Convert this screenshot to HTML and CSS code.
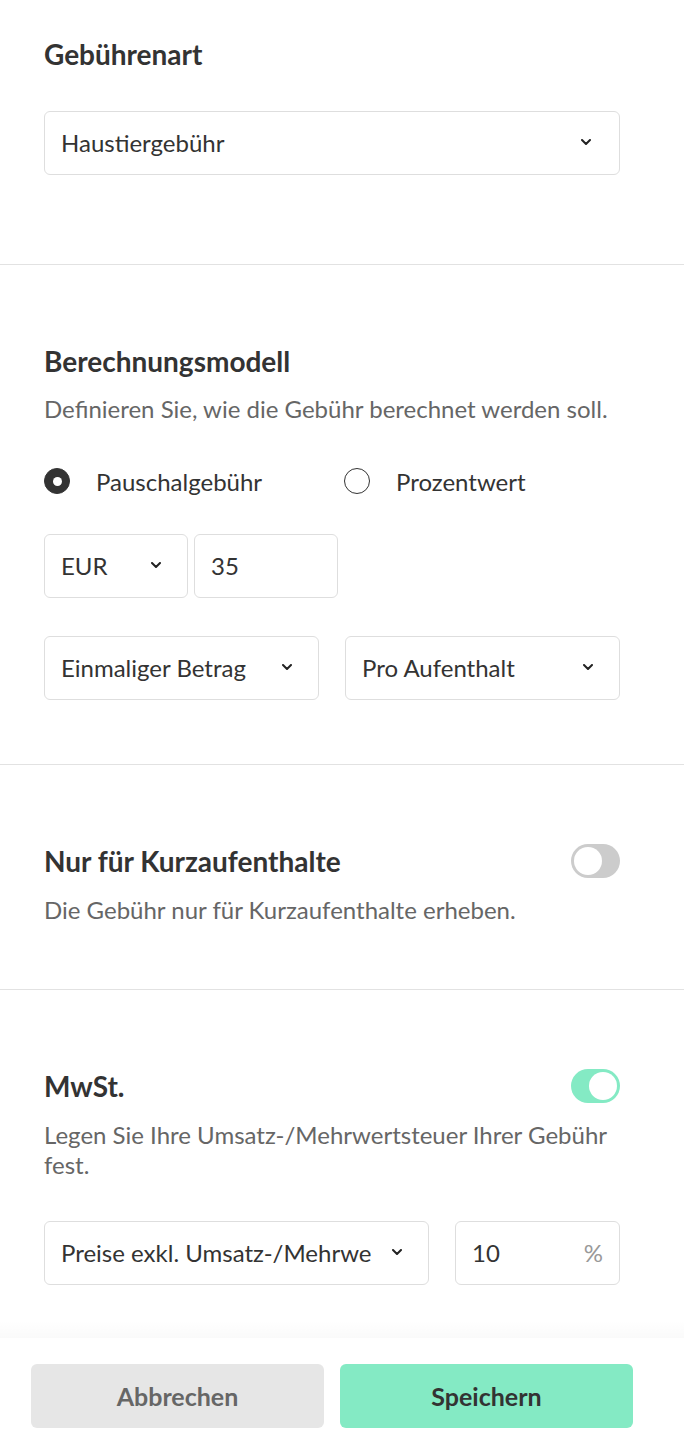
FILE: index.html
```html
<!DOCTYPE html>
<html lang="de">
<head>
<meta charset="utf-8">
<title>Gebühr</title>
<link rel="stylesheet" href="styles.css">
</head>
<body>
<div class="page">
  <section class="sec sec-1">
    <h2 class="title">Gebührenart</h2>
    <div class="field select">
      <span class="val">Haustiergebühr</span>
      <svg class="chev" viewBox="0 0 10 6" width="10" height="6"><path d="M1 1l4 4 4-4" fill="none" stroke="#222" stroke-width="2" stroke-linecap="round" stroke-linejoin="round"/></svg>
    </div>
  </section>

  <section class="sec sec-2">
    <h2 class="title">Berechnungsmodell</h2>
    <p class="desc">Definieren Sie, wie die Gebühr berechnet werden soll.</p>
    <div class="radios">
      <label class="radio"><span class="dot on"></span><span class="rlabel">Pauschalgebühr</span></label>
      <label class="radio"><span class="dot"></span><span class="rlabel">Prozentwert</span></label>
    </div>
    <div class="row row-amount">
      <div class="field select">
        <span class="val">EUR</span>
        <svg class="chev" viewBox="0 0 10 6" width="10" height="6"><path d="M1 1l4 4 4-4" fill="none" stroke="#222" stroke-width="2" stroke-linecap="round" stroke-linejoin="round"/></svg>
      </div>
      <div class="field input"><span class="val">35</span></div>
    </div>
    <div class="row row-freq">
      <div class="field select">
        <span class="val">Einmaliger Betrag</span>
        <svg class="chev" viewBox="0 0 10 6" width="10" height="6"><path d="M1 1l4 4 4-4" fill="none" stroke="#222" stroke-width="2" stroke-linecap="round" stroke-linejoin="round"/></svg>
      </div>
      <div class="field select">
        <span class="val">Pro Aufenthalt</span>
        <svg class="chev" viewBox="0 0 10 6" width="10" height="6"><path d="M1 1l4 4 4-4" fill="none" stroke="#222" stroke-width="2" stroke-linecap="round" stroke-linejoin="round"/></svg>
      </div>
    </div>
  </section>

  <section class="sec sec-3">
    <div class="head">
      <h2 class="title">Nur für Kurzaufenthalte</h2>
      <span class="toggle"><span class="knob"></span></span>
    </div>
    <p class="desc">Die Gebühr nur für Kurzaufenthalte erheben.</p>
  </section>

  <section class="sec sec-4">
    <div class="head">
      <h2 class="title">MwSt.</h2>
      <span class="toggle on"><span class="knob"></span></span>
    </div>
    <p class="desc">Legen Sie Ihre Umsatz-/Mehrwertsteuer Ihrer Gebühr fest.</p>
    <div class="row row-tax">
      <div class="field select">
        <span class="val clip">Preise exkl. Umsatz-/Mehrwe</span>
        <svg class="chev" viewBox="0 0 10 6" width="10" height="6"><path d="M1 1l4 4 4-4" fill="none" stroke="#222" stroke-width="2" stroke-linecap="round" stroke-linejoin="round"/></svg>
      </div>
      <div class="field input"><span class="val">10</span><span class="unit">%</span></div>
    </div>
  </section>

  <footer class="footer">
    <button class="btn btn-cancel">Abbrechen</button>
    <button class="btn btn-save">Speichern</button>
  </footer>
</div>
</body>
</html>
```

FILE: styles.css
```css
* { box-sizing: border-box; }
html, body { margin: 0; padding: 0; background: #fff; }
body {
  font-family: Lato, "Open Sans", "Liberation Sans", sans-serif;
  color: #333;
  width: 684px;
}
.page { display: flex; flex-direction: column; }

.sec {
  padding: 0 64px 0 44px;
  border-bottom: 1px solid #e2e2e2;
}
.sec-1 { padding-top: 39px; padding-bottom: 89px; }
.sec-2 { padding-top: 81px; padding-bottom: 64px; }
.sec-3 { padding-top: 79px; padding-bottom: 64px; }
.sec-4 { padding-top: 79px; padding-bottom: 53px; border-bottom: none; }

.title {
  margin: 0;
  font-size: 28px;
  line-height: 30px;
  font-weight: 700;
  color: #333;
}
.desc {
  margin: 18px 0 0;
  font-size: 24px;
  line-height: 30px;
  color: #666;
}
.sec-3 .desc, .sec-4 .desc { margin-top: 17px; }

.field {
  height: 64px;
  border: 1px solid #dedede;
  border-radius: 6px;
  display: flex;
  align-items: center;
  padding: 0 26px 2px 16px;
  font-size: 24px;
  color: #333;
  background: #fff;
}
.select { justify-content: space-between; }
.sec-1 .field { margin-top: 42px; padding-right: 28px; }
.val { white-space: nowrap; overflow: hidden; }
.chev { flex: none; margin-left: 12px; }

.radios {
  margin-top: 42px;
  display: grid;
  grid-template-columns: 300px auto;
  height: 30px;
  align-items: center;
}
.radio { display: flex; align-items: center; font-size: 24px; color: #333; }
.dot {
  width: 26px; height: 26px;
  border-radius: 50%;
  border: 1.5px solid #333;
  margin-right: 26px;
  flex: none;
  display: flex; align-items: center; justify-content: center;
}
.dot.on { background: #333; border-color: #333; }
.dot.on::after {
  content: "";
  width: 9px; height: 9px;
  border-radius: 50%;
  background: #fff;
}

.row { display: flex; margin-top: 38px; }
.row-amount { gap: 6px; }
.row-amount .field { width: 144px; }
.row-freq { gap: 26px; }
.row-freq .field { flex: 1; }
.row-tax { gap: 26px; margin-top: 41px; }
.row-tax .select { width: 385px; }
.row-tax .input { flex: 1; justify-content: space-between; padding-right: 16px; }
.unit { color: #999; }

.head {
  display: flex;
  justify-content: space-between;
  align-items: center;
  height: 34px;
}
.toggle {
  width: 49px; height: 34px;
  border-radius: 17px;
  background: #cccccc;
  padding: 3px;
  display: flex;
  flex: none;
}
.toggle .knob {
  width: 28px; height: 28px;
  border-radius: 50%;
  background: #fff;
}
.toggle.on { background: #84eac4; justify-content: flex-end; }

.footer {
  position: relative;
  display: flex;
  gap: 16px;
  padding: 26px 51px 26px 31px;
  background: #fff;
}
.footer::before {
  content: "";
  position: absolute;
  left: 0; right: 0; top: -18px; height: 18px;
  background: linear-gradient(to bottom, rgba(0,0,0,0), rgba(0,0,0,0.02));
}
.btn {
  flex: 1;
  height: 64px;
  border: none;
  border-radius: 6px;
  font-family: inherit;
  font-size: 25px;
  font-weight: 700;
  cursor: pointer;
}
.btn-cancel { background: #e6e6e6; color: #666; }
.btn-save { background: #84eac4; color: #333; }
```
